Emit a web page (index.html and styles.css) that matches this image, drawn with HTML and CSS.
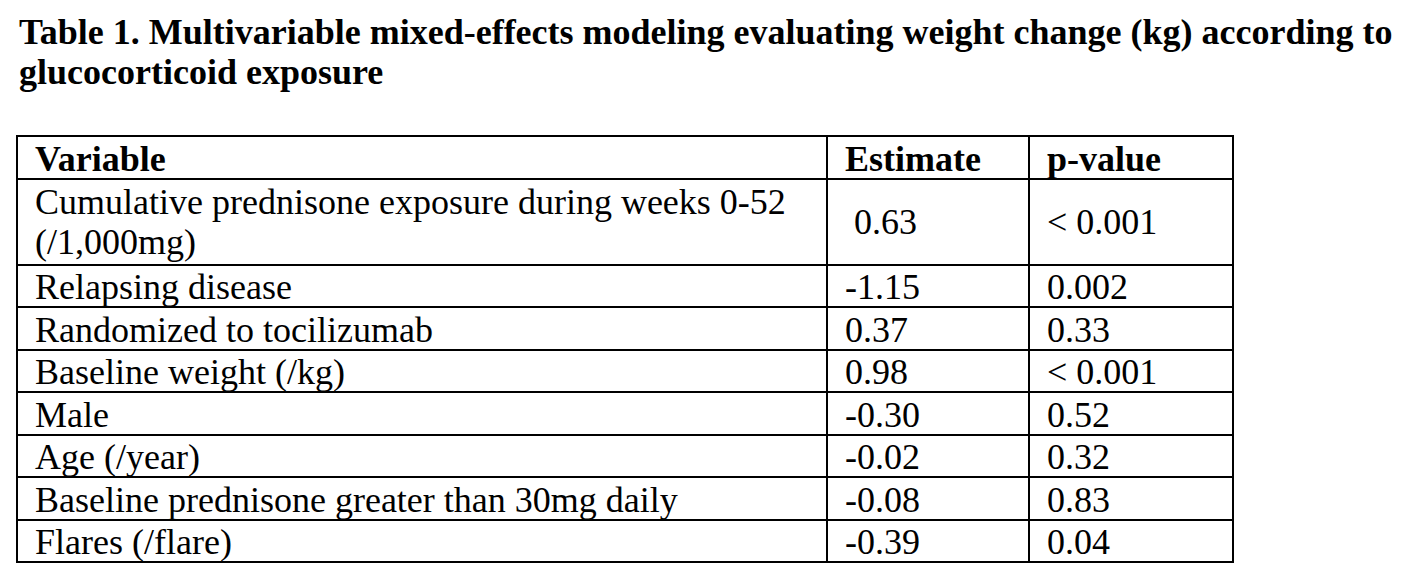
FILE: index.html
```html
<!DOCTYPE html>
<html>
<head>
<meta charset="utf-8">
<link rel="stylesheet" href="styles.css">
</head>
<body>
<div class="page">
  <h1 class="title">Table 1. Multivariable mixed-effects modeling evaluating weight change (kg) according to<br>glucocorticoid exposure</h1>
  <table class="data">
    <colgroup>
      <col class="c-var">
      <col class="c-est">
      <col class="c-p">
    </colgroup>
    <thead>
      <tr><th>Variable</th><th>Estimate</th><th>p-value</th></tr>
    </thead>
    <tbody>
      <tr class="tall"><td>Cumulative prednisone exposure during weeks 0-52 (/1,000mg)</td><td class="mid">&nbsp;0.63</td><td class="mid">&lt; 0.001</td></tr>
      <tr><td>Relapsing disease</td><td>-1.15</td><td>0.002</td></tr>
      <tr><td>Randomized to tocilizumab</td><td>0.37</td><td>0.33</td></tr>
      <tr><td>Baseline weight (/kg)</td><td>0.98</td><td>&lt; 0.001</td></tr>
      <tr><td>Male</td><td>-0.30</td><td>0.52</td></tr>
      <tr><td>Age (/year)</td><td>-0.02</td><td>0.32</td></tr>
      <tr><td>Baseline prednisone greater than 30mg daily</td><td>-0.08</td><td>0.83</td></tr>
      <tr><td>Flares (/flare)</td><td>-0.39</td><td>0.04</td></tr>
    </tbody>
  </table>
</div>
</body>
</html>
```

FILE: styles.css
```css
html, body {
  margin: 0;
  padding: 0;
  background: #fff;
  color: #000;
}

.page {
  padding: 0 0 0 16px;
  font-family: "Liberation Serif", "Times New Roman", serif;
}

.title {
  margin: 0;
  padding: 12px 0 0 3px;
  font-size: 36px;
  line-height: 40px;
  font-weight: bold;
  letter-spacing: 0;
  white-space: nowrap;
}

.data {
  margin-top: 43px;
  border-collapse: collapse;
  table-layout: fixed;
  width: 1218px;
  font-size: 36px;
}

.c-var { width: 810px; }
.c-est { width: 202px; }
.c-p { width: 204px; }

.data th,
.data td {
  border: 2px solid #000;
  padding: 2.5px 16px 0 17px;
  line-height: 38px;
  text-align: left;
  vertical-align: top;
  white-space: nowrap;
}

.data th {
  font-weight: bold;
}

.data tr.tall td {
  white-space: normal;
  line-height: 40px;
  padding-top: 2px;
  padding-bottom: 2px;
}

.data tr.tall td.mid {
  vertical-align: middle;
}
```
